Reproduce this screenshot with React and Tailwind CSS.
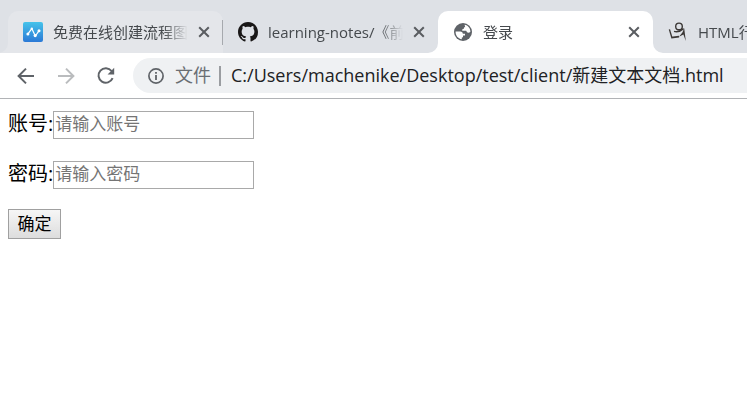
import React from "react";

function ChartLogo() {
  return (
    <svg className="size-5" viewBox="0 0 20 20" aria-hidden="true">
      <defs>
        <linearGradient id="chart-bg" x1="0" y1="0" x2="0" y2="1">
          <stop offset="0" stopColor="#45c3ea" />
          <stop offset="1" stopColor="#2b79d6" />
        </linearGradient>
      </defs>
      <rect width="20" height="20" rx="2" fill="url(#chart-bg)" />
      <path d="M4.8 12.2L8.8 6.6L12.3 14L16 8.8" fill="none" stroke="#fff" strokeWidth="1.2" strokeLinejoin="round" />
      <circle cx="4.9" cy="12" r="1.5" fill="#fff" />
      <circle cx="8.8" cy="6.7" r="1.2" fill="#fff" />
      <circle cx="12.2" cy="13.6" r="1.6" fill="#fff" />
      <circle cx="16" cy="8.8" r="1.5" fill="#fff" />
    </svg>
  );
}

function GithubLogo() {
  return (
    <svg className="size-5" viewBox="0 0 16 16" fill="#191717" aria-hidden="true">
      <path d="M8 0C3.58 0 0 3.58 0 8c0 3.54 2.29 6.53 5.47 7.59.4.07.55-.17.55-.38 0-.19-.01-.82-.01-1.49-2.01.37-2.53-.49-2.69-.94-.09-.23-.48-.94-.82-1.13-.28-.15-.68-.52-.01-.53.63-.01 1.08.58 1.23.82.72 1.21 1.87.87 2.33.66.07-.52.28-.87.51-1.07-1.78-.2-3.64-.89-3.64-3.95 0-.87.31-1.59.82-2.15-.08-.2-.36-1.02.08-2.12 0 0 .67-.21 2.2.82.64-.18 1.32-.27 2-.27s1.36.09 2 .27c1.53-1.04 2.2-.82 2.2-.82.44 1.1.16 1.92.08 2.12.51.56.82 1.27.82 2.15 0 3.07-1.87 3.75-3.65 3.95.29.25.54.73.54 1.48 0 1.07-.01 1.93-.01 2.2 0 .21.15.46.55.38A8.01 8.01 0 0 0 16 8c0-4.42-3.58-8-8-8z" />
    </svg>
  );
}

function GlobeLogo() {
  return (
    <svg className="size-5" viewBox="0 0 20 20" aria-hidden="true">
      <circle cx="10" cy="10" r="9" fill="#5f6368" />
      <path d="M11.6 2.8C15 3.4 17.4 6.2 17.4 9.8C16.4 10.8 15 11 14 10.2L13.2 8.8H9.2V7.4L11 6.6V5.2H12.2Z" fill="#fff" />
      <path d="M2.6 9.6H7.2C9 9.6 9.8 10.6 9.8 11.8H12V13.6H10V15.2L8.8 15.6V17.3C5 16.8 2.4 13.6 2.6 9.6Z" fill="#fff" />
    </svg>
  );
}

function FigureLogo() {
  return (
    <svg className="size-5" viewBox="0 0 20 20" fill="none" stroke="#3b3735" aria-hidden="true">
      <circle cx="11" cy="4.4" r="3.3" strokeWidth="1.4" />
      <path d="M1.4 7.4L3.8 15.4" strokeWidth="1.4" />
      <path d="M3.2 15.6L11 14.6" strokeWidth="1.8" />
      <path d="M6 9.4C9 10.2 12.4 9.4 15.6 6.6" strokeWidth="1.4" />
      <path d="M16.2 6.2L17.8 19L15.4 12.4L11 14.8L14.4 10.6Z" fill="#3b3735" stroke="none" />
    </svg>
  );
}

function CloseIcon() {
  return (
    <svg className="size-3" viewBox="0 0 12 12" fill="none" stroke="#5a5d61" strokeWidth="2" aria-hidden="true">
      <path d="M1.2 1.2L10.8 10.8M10.8 1.2L1.2 10.8" />
    </svg>
  );
}

function ArrowIcon({ className }) {
  return (
    <svg className={className} viewBox="0 0 18 18" fill="none" stroke="currentColor" strokeWidth="2" aria-hidden="true">
      <path d="M17 9H2M9 1.6L1.6 9L9 16.4" />
    </svg>
  );
}

function ReloadIcon() {
  return (
    <svg className="size-[18px]" viewBox="0 0 18 18" aria-hidden="true">
      <path d="M14.6 4A7.3 7.3 0 1 0 15.6 11.2" fill="none" stroke="#5f6368" strokeWidth="2" />
      <path d="M17.2 0.8V7.4H10.6Z" fill="#5f6368" />
    </svg>
  );
}

function InfoIcon() {
  return (
    <svg className="size-4 shrink-0" viewBox="0 0 16 16" aria-hidden="true">
      <circle cx="8" cy="8" r="7.1" fill="none" stroke="#5f6368" strokeWidth="1.7" />
      <path d="M7.1 7.1H8.9V12H7.1ZM7.1 4H8.9V5.8H7.1Z" fill="#5f6368" />
    </svg>
  );
}

function Flare({ className }) {
  return (
    <svg className={className} viewBox="0 0 10 10" fill="currentColor" aria-hidden="true">
      <path d="M10 0V10H0A10 10 0 0 0 10 0Z" />
    </svg>
  );
}

const tabs = [
  { title: "免费在线创建流程图", Logo: ChartLogo, state: "hover", divider: true },
  { title: "learning-notes/《前端》", Logo: GithubLogo, state: "idle" },
  { title: "登录", Logo: GlobeLogo, state: "active" },
  { title: "HTML行内元素", Logo: FigureLogo, state: "idle" },
];

const tones = {
  hover: "bg-[#e4e6ea] text-[#e4e6ea]",
  idle: "text-[#dee1e6]",
  active: "bg-white text-white",
};

function Tab({ title, Logo, state, divider }) {
  return (
    <div className={`relative flex h-[42px] w-[215px] shrink-0 items-center rounded-t-[10px] pl-[15px] ${tones[state]}`}>
      {state !== "idle" && <Flare className="absolute bottom-0 -left-[10px] size-[10px]" />}
      {state === "active" && <Flare className="absolute bottom-0 -right-[10px] size-[10px] -scale-x-100" />}
      <Logo />
      <span className="ml-[10px] w-[135px] overflow-hidden text-[15px] leading-5 whitespace-nowrap text-[#45494d] [mask-image:linear-gradient(to_right,black_110px,transparent)]">
        {title}
      </span>
      <button type="button" aria-label="关闭" className="ml-[10px]">
        <CloseIcon />
      </button>
      {divider && <span className="absolute top-[9px] right-0 h-[25px] w-px bg-[#a6a9ae]" />}
    </div>
  );
}

function Field({ id, label, placeholder, type }) {
  return (
    <div className="flex items-center">
      <label htmlFor={id} className="pb-0.5 text-[20px] leading-[26px]">
        {label}:
      </label>
      <input
        id={id}
        type={type}
        placeholder={placeholder}
        className="h-7 w-[201px] border border-[#a9a9a9] bg-white px-px pb-1 text-[17px] leading-6 placeholder:text-[#757575]"
      />
    </div>
  );
}

export default function App() {
  return (
    <div className="min-h-screen overflow-hidden bg-white font-['Open_Sans','Noto_Sans_CJK_SC',sans-serif] text-black">
      <nav aria-label="标签页" className="flex overflow-hidden bg-[#dee1e6] pt-[11px] pl-2">
        {tabs.map((tab) => (
          <Tab key={tab.title} {...tab} />
        ))}
      </nav>

      <header className="flex h-[46px] items-center border-b border-[#b1b3b6] pl-[17px]">
        <button type="button" aria-label="后退" className="text-[#5f6368]">
          <ArrowIcon className="size-[18px]" />
        </button>
        <button type="button" aria-label="前进" disabled className="ml-[22px] text-[#babcbe]">
          <ArrowIcon className="size-[18px] -scale-x-100" />
        </button>
        <button type="button" aria-label="重新加载" className="ml-[22px]">
          <ReloadIcon />
        </button>
        <div className="ml-[18px] flex h-[35px] flex-1 items-center rounded-l-full bg-[#eff1f3] pl-[15px] text-[18px] leading-6 whitespace-nowrap">
          <InfoIcon />
          <span className="ml-[11px] pb-0.5 text-[#6a6e73]">文件</span>
          <span className="ml-2 h-5 w-0.5 bg-[#9a9da1]" />
          <span className="ml-[10px] pb-0.5 text-[#202124]">C:/Users/machenike/Desktop/test/client/新建文本文档.html</span>
        </div>
      </header>

      <form className="flex flex-col items-start gap-5 px-2 pt-3" onSubmit={(e) => e.preventDefault()}>
        <div className="flex flex-col gap-[22px]">
          <Field id="account" label="账号" placeholder="请输入账号" type="text" />
          <Field id="password" label="密码" placeholder="请输入密码" type="password" />
        </div>
        <button
          type="submit"
          className="h-[30px] w-[53px] border border-[#a0a0a0] bg-linear-to-b from-[#f6f6f6] to-[#dddddd] text-[17px] leading-6"
        >
          确定
        </button>
      </form>
    </div>
  );
}
